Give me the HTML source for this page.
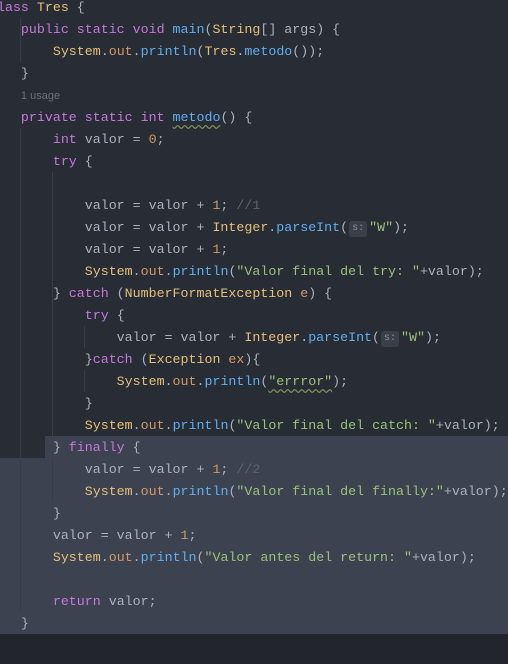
<!DOCTYPE html>
<html><head><meta charset="utf-8"><style>
html,body{margin:0;padding:0;width:508px;height:664px;overflow:hidden;background:#23252c}
#ed{position:absolute;left:0;top:0;width:508px;height:634px;background:#282c34}
.hl{position:absolute;background:#3d4251}
pre{position:absolute;left:-11px;top:-3px;margin:0;font-family:"Liberation Mono",monospace;font-size:13.3px;line-height:22px;color:#abb2bf;white-space:pre}
.k{color:#c678dd}.f{color:#61afef}.y{color:#e5c07b}.o{color:#d19a66}.s{color:#98c379}.c{color:#5c6370}.n{color:#d19a66}
.u{font-family:"Liberation Sans",sans-serif;font-size:11px;color:#6b717d}
.h{display:inline-block;background:#3b3f4a;color:#8b909a;font-size:10px;line-height:16px;border-radius:3px;padding:0 3px;vertical-align:1px;margin:0 2px 0 1px}
.w{text-decoration:underline wavy #7a8a5a;text-underline-offset:3px}
.g{position:absolute;width:1px;background:#383c46}
</style></head><body>
<div id="ed"></div>
<div class="hl" style="left:45px;top:436px;width:463px;height:22px"></div>
<div class="hl" style="left:0;top:458px;width:508px;height:176px"></div>
<div class="g" style="left:20px;top:18px;height:44px"></div>
<div class="g" style="left:20px;top:128px;height:484px"></div>
<div class="g" style="left:52px;top:172px;height:264px"></div>
<div class="g" style="left:52px;top:458px;height:44px"></div>
<div class="g" style="left:84px;top:326px;height:22px"></div>
<div class="g" style="left:84px;top:370px;height:22px"></div>
<pre><span class="k">class</span> <span class="y">Tres</span> {
    <span class="k">public static void</span> <span class="f">main</span>(<span class="y">String</span>[] args) {
        <span class="y">System</span>.<span class="o">out</span>.<span class="f">println</span>(<span class="y">Tres</span>.<span class="f">metodo</span>());
    }
    <span class="u">1 usage</span>
    <span class="k">private static int</span> <span class="f w">metodo</span>() {
        <span class="k">int</span> valor = <span class="n">0</span>;
        <span class="k">try</span> {

            valor = valor + <span class="n">1</span>; <span class="c">//1</span>
            valor = valor + <span class="y">Integer</span>.<span class="f">parseInt</span>(<span class="h">s:</span><span class="s">"W"</span>);
            valor = valor + <span class="n">1</span>;
            <span class="y">System</span>.<span class="o">out</span>.<span class="f">println</span>(<span class="s">"Valor final del try: "</span>+valor);
        } <span class="k">catch</span> (<span class="y">NumberFormatException</span> <span class="o">e</span>) {
            <span class="k">try</span> {
                valor = valor + <span class="y">Integer</span>.<span class="f">parseInt</span>(<span class="h">s:</span><span class="s">"W"</span>);
            }<span class="k">catch</span> (<span class="y">Exception</span> <span class="o">ex</span>){
                <span class="y">System</span>.<span class="o">out</span>.<span class="f">println</span>(<span class="s w">"errror"</span>);
            }
            <span class="y">System</span>.<span class="o">out</span>.<span class="f">println</span>(<span class="s">"Valor final del catch: "</span>+valor);
        } <span class="k">finally</span> {
            valor = valor + <span class="n">1</span>; <span class="c">//2</span>
            <span class="y">System</span>.<span class="o">out</span>.<span class="f">println</span>(<span class="s">"Valor final del finally:"</span>+valor);
        }
        valor = valor + <span class="n">1</span>;
        <span class="y">System</span>.<span class="o">out</span>.<span class="f">println</span>(<span class="s">"Valor antes del return: "</span>+valor);

        <span class="k">return</span> valor;
    }</pre>
</body></html>
